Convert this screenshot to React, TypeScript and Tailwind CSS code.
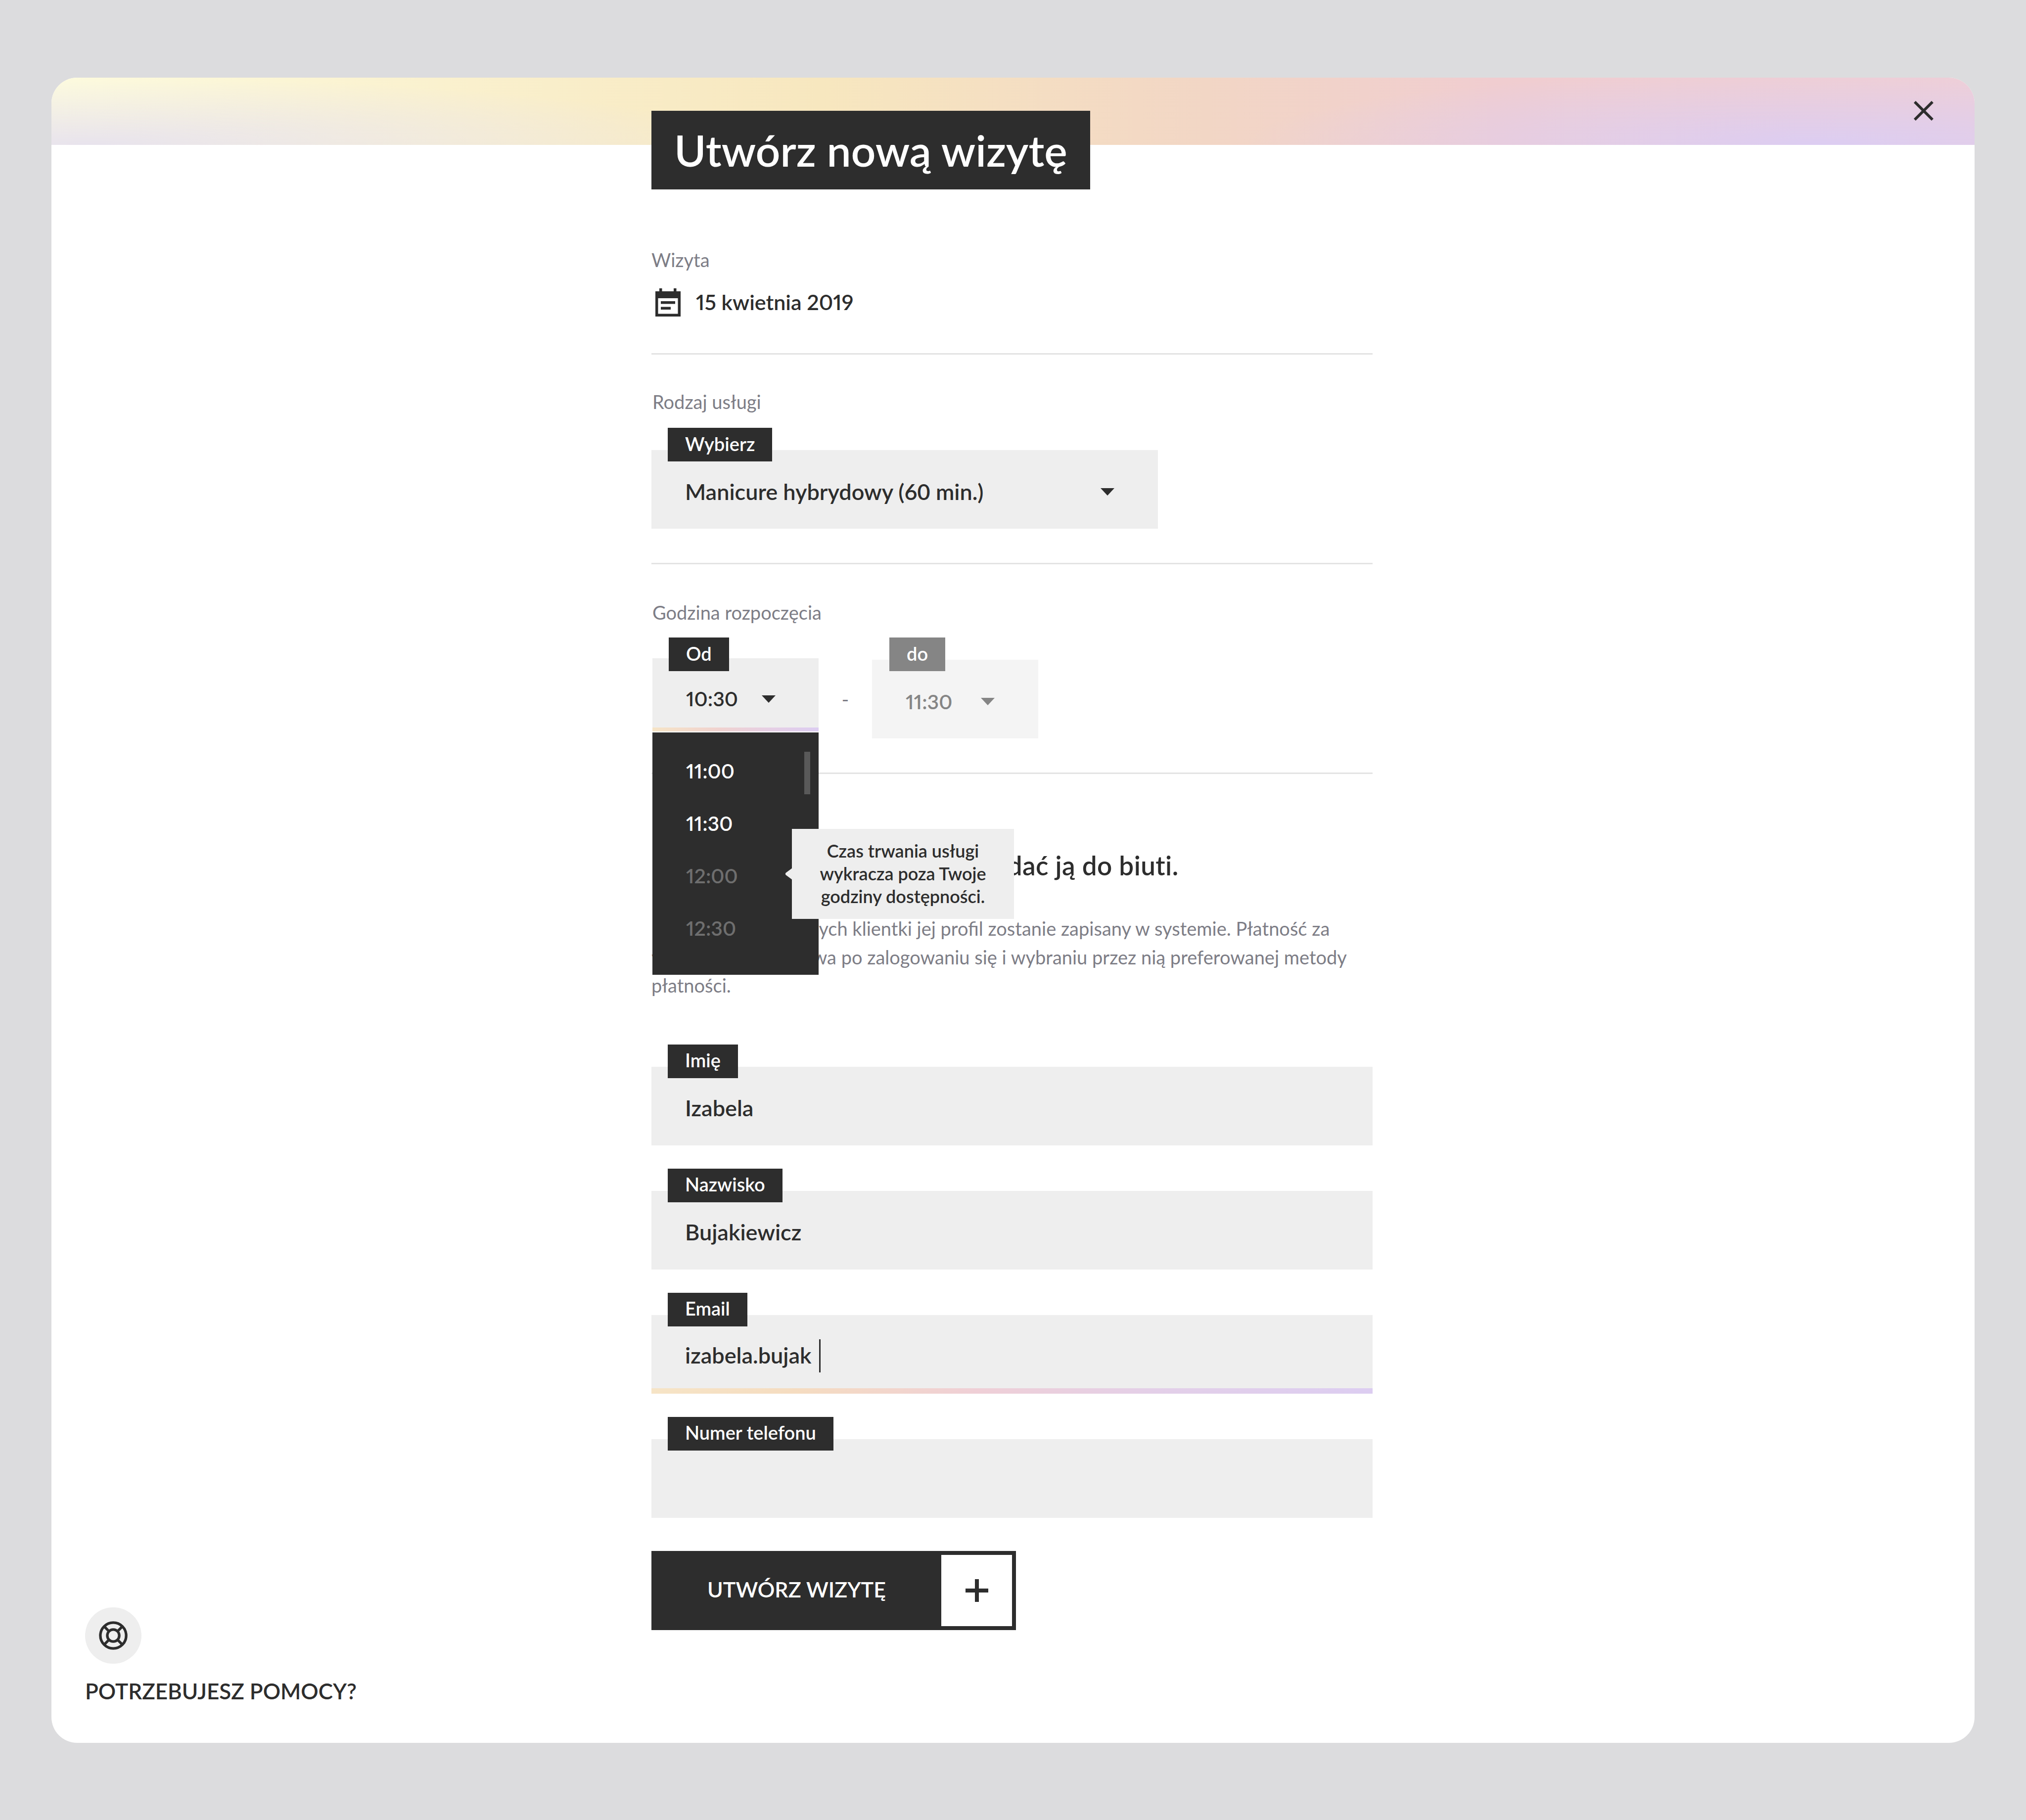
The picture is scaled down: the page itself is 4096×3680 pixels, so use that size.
import React from 'react';

function Caret({ muted = false }: { muted?: boolean }) {
  return (
    <svg width="28" height="15" viewBox="0 0 28 15" className={muted ? 'text-[#858585]' : 'text-[#2d2d2d]'}>
      <polygon points="0,0 28,0 14,15" fill="currentColor" />
    </svg>
  );
}

function CalendarIcon() {
  return (
    <svg width="51" height="57" viewBox="0 0 51 57" className="shrink-0">
      <rect x="8" y="0" width="5.5" height="8" fill="#2d2d2d" />
      <rect x="37" y="0" width="5.5" height="8" fill="#2d2d2d" />
      <rect x="0" y="6" width="51" height="51" fill="#2d2d2d" />
      <rect x="5.5" y="20" width="40" height="31.5" fill="#ffffff" />
      <rect x="11" y="26" width="29" height="5.5" fill="#2d2d2d" />
      <rect x="11" y="37.5" width="20" height="5.5" fill="#2d2d2d" />
    </svg>
  );
}

function Tag({ children, muted = false }: { children: React.ReactNode; muted?: boolean }) {
  return (
    <div className={`absolute top-0 z-10 h-[68px] px-[35px] pb-[4px] flex items-center text-[38px] font-semibold text-white ${muted ? 'left-[35px] bg-[#858585]' : 'left-[33px] bg-[#2d2d2d]'}`}>
      {children}
    </div>
  );
}

function Field({ label, children, focused = false }: { label: string; children?: React.ReactNode; focused?: boolean }) {
  return (
    <div className="relative pt-[45px]">
      <Tag>{label}</Tag>
      <div className="h-[159px] bg-[#eeeeee] flex flex-col">
        <div className={`flex-1 flex items-center pl-[68px] text-[45px] font-semibold text-[#2d2d2d] ${focused ? 'pt-[17px]' : 'pt-[10px]'}`}>
          {children}
        </div>
        {focused && <div className="h-[11px] bg-[linear-gradient(90deg,#f6e4c6_0%,#f5dcc0_20%,#efcfd6_45%,#e3cfe8_70%,#dccdf1_100%)]" />}
      </div>
    </div>
  );
}

function Divider() {
  return <div className="h-[3px] bg-[#e3e3e3]" />;
}

function Label({ children, inset = false }: { children: React.ReactNode; inset?: boolean }) {
  return <div className={`h-[50px] leading-[50px] text-[38px] text-[#7d7d86] ${inset ? 'pl-[2px]' : ''}`}>{children}</div>;
}

function TimeDropdown() {
  const times = [
    { t: '11:00', ok: true },
    { t: '11:30', ok: true },
    { t: '12:00', ok: false },
    { t: '12:30', ok: false },
  ];
  return (
    <div className="absolute top-[192px] left-0 z-20 w-[336px] h-[490px] bg-[#2d2d2d] pt-[25px]">
      <div className="absolute top-[39px] left-[307px] w-[12px] h-[86px] bg-[#595959]" />
      {times.map((item) => (
        <div key={item.t} className={`h-[106px] pl-[68px] flex items-center text-[41px] font-semibold proportional-nums ${item.ok ? 'text-white' : 'text-[#6e6e6e]'}`}>
          {item.t}
        </div>
      ))}
    </div>
  );
}

function DurationTooltip() {
  return (
    <div className="absolute top-[387px] left-[282px] z-30 w-[449px] h-[182px] pb-[3px] bg-[#eeeeee] flex flex-col justify-center text-center text-[36px] leading-[46px] font-semibold text-[#2d2d2d]">
      <svg width="15" height="24" viewBox="0 0 15 24" className="absolute left-[-14px] top-[79px]">
        <path d="M15 0 L1.5 10 Q0 12 1.5 14 L15 24 Z" fill="#eeeeee" />
      </svg>
      <div>Czas trwania usługi</div>
      <div>wykracza poza Twoje</div>
      <div>godziny dostępności.</div>
    </div>
  );
}

export default function App() {
  return (
    <div className="w-[4096px] h-[3680px] bg-[#dcdcde] pt-[157px] pl-[104px] font-['Lato',sans-serif]">
      <div className="relative w-[3888px] h-[3367px] rounded-[52px] bg-white overflow-hidden flex flex-col">
        <div className="h-[136px] shrink-0 bg-[radial-gradient(ellipse_34%_100%_at_2%_100%,rgba(231,226,238,0.95),rgba(231,226,238,0)),radial-gradient(ellipse_30%_110%_at_92%_100%,rgba(220,205,242,1),rgba(220,205,242,0)),linear-gradient(90deg,#fdfbde_0%,#f7e7bf_40%,#f2d6c5_60%,#f0cdd0_75%,#efcfd6_100%)]" />

        <button className="absolute top-[47px] left-[3765px]">
          <svg width="40" height="40" viewBox="0 0 40 40" className="block">
            <path d="M2 2 L38 38 M38 2 L2 38" stroke="#2d2d2d" strokeWidth="5.5" fill="none" />
          </svg>
        </button>

        <div className="flex flex-1">
          <aside className="w-[1213px] shrink-0 flex flex-col justify-end pl-[68px] pb-[80px]">
            <div className="w-[114px] h-[114px] rounded-full bg-[#eeeeee] flex items-center justify-center">
              <svg width="58" height="58" viewBox="0 0 24 24" fill="none" stroke="#2d2d2d" strokeWidth="2.2">
                <circle cx="12" cy="12" r="10.8" />
                <circle cx="12" cy="12" r="5" />
                <path d="M4.4 4.4 L8.5 8.5 M19.6 4.4 L15.5 8.5 M4.4 19.6 L8.5 15.5 M19.6 19.6 L15.5 15.5" />
              </svg>
            </div>
            <div className="mt-[30px] text-[44px] leading-[50px] font-semibold text-[#2d2d2d]">POTRZEBUJESZ POMOCY?</div>
          </aside>

          <div className="w-[1458px] mt-[-69px]">
            <h1 className="inline-flex items-center h-[159px] px-[46px] bg-[#2d2d2d] text-white text-[87.5px] font-semibold">
              Utwórz nową wizytę
            </h1>

            <div className="mt-[117px]">
              <Label>Wizyta</Label>
              <div className="mt-[31px] h-[60px] flex items-center pl-[8px] gap-[31px]">
                <CalendarIcon />
                <span className="text-[43px] font-semibold text-[#2d2d2d] proportional-nums">15 kwietnia 2019</span>
              </div>
            </div>
            <div className="mt-[73px]"><Divider /></div>

            <div className="mt-[70px]">
              <Label inset>Rodzaj usługi</Label>
              <div className="mt-[28px] relative pt-[45px] w-[1024px]">
                <Tag>Wybierz</Tag>
                <div className="h-[159px] bg-[#eeeeee] flex items-center justify-between pl-[68px] pr-[88px] pt-[10px] text-[45px] font-semibold text-[#2d2d2d]">
                  <span>Manicure hybrydowy (60 min.)</span>
                  <Caret />
                </div>
              </div>
            </div>
            <div className="mt-[69px]"><Divider /></div>

            <div className="mt-[72px]">
              <Label inset>Godzina rozpoczęcia</Label>
              <div className="mt-[26px] ml-[2px] flex items-start h-[204px]">
                <div className="relative w-[336px] pt-[42px]">
                  <Tag>Od</Tag>
                  <div className="h-[148px] bg-[#eeeeee] flex flex-col">
                    <div className="flex-1 flex items-center pl-[68px] pt-[24px] gap-[48px] text-[41px] font-semibold text-[#2d2d2d] proportional-nums">
                      <span>10:30</span>
                      <Caret />
                    </div>
                    <div className="h-[8px] bg-[linear-gradient(90deg,#f6e4c6_0%,#f0d2cf_40%,#e6cfe4_70%,#dccdf1_100%)]" />
                  </div>
                  <TimeDropdown />
                  <DurationTooltip />
                </div>
                <div className="w-[108px] h-[166px] flex items-center justify-center pt-[84px] text-[40px] text-[#7d7d86]">-</div>
                <div className="relative w-[336px] pt-[45px]">
                  <Tag muted>do</Tag>
                  <div className="h-[159px] bg-[#f4f4f4] flex items-center pl-[68px] pt-[10px] gap-[58px] text-[41px] font-semibold text-[#858585] proportional-nums">
                    <span>11:30</span>
                    <Caret muted />
                  </div>
                </div>
              </div>
            </div>
            <div className="mt-[69px]"><Divider /></div>

            <h2 className="mt-[150px] h-[70px] leading-[70px] text-[53px] font-semibold tracking-[0.42px] text-[#2d2d2d]">
              Nowa klientka? Możesz też dodać ją do biuti.
            </h2>
            <p className="mt-[64px] text-[38px] leading-[57.5px] text-[#7d7d86] whitespace-nowrap">
              Po uzupełnieniu danych klientki jej profil zostanie zapisany w systemie. Płatność za<br />
              wizytę będzie możliwa po zalogowaniu się i wybraniu przez nią preferowanej metody<br />
              płatności.
            </p>

            <div className="mt-[90px] flex flex-col gap-[47px]">
              <Field label="Imię">Izabela</Field>
              <Field label="Nazwisko">Bujakiewicz</Field>
              <Field label="Email" focused>
                <span>izabela.bujak</span>
                <span className="ml-[15px] w-[3px] h-[67px] bg-[#2d2d2d]" />
              </Field>
              <Field label="Numer telefonu" />
            </div>

            <button className="mt-[67px] w-[737px] h-[160px] bg-[#2d2d2d] flex items-center justify-between pl-[113px] pr-[8px]">
              <span className="text-[43px] pb-[3px] font-semibold text-white">UTWÓRZ WIZYTĘ</span>
              <span className="w-[143px] h-[144px] bg-white flex items-center justify-center">
                <svg width="46" height="46" viewBox="0 0 46 46">
                  <path d="M23 0 V46 M0 23 H46" stroke="#2d2d2d" strokeWidth="8" fill="none" />
                </svg>
              </span>
            </button>
          </div>
        </div>
      </div>
    </div>
  );
}
